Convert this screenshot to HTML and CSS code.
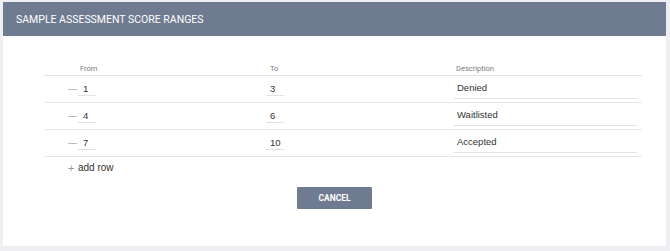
FILE: index.html
```html
<!DOCTYPE html>
<html>
<head>
<meta charset="utf-8">
<link rel="stylesheet" href="styles.css">
</head>
<body>
<div class="card">
  <div class="card-header">SAMPLE ASSESSMENT SCORE RANGES</div>
  <div class="card-body">
    <div class="table">
      <div class="row head">
        <div class="cell c-from"><span class="th th-from">From</span></div>
        <div class="cell c-to"><span class="th th-to">To</span></div>
        <div class="cell c-desc"><span class="th th-desc">Description</span></div>
      </div>
      <div class="row">
        <div class="cell c-from"><span class="minus">—</span><span class="num">1</span></div>
        <div class="cell c-to"><span class="num">3</span></div>
        <div class="cell c-desc"><span class="desc">Denied</span></div>
      </div>
      <div class="row">
        <div class="cell c-from"><span class="minus">—</span><span class="num">4</span></div>
        <div class="cell c-to"><span class="num">6</span></div>
        <div class="cell c-desc"><span class="desc">Waitlisted</span></div>
      </div>
      <div class="row">
        <div class="cell c-from"><span class="minus">—</span><span class="num">7</span></div>
        <div class="cell c-to"><span class="num">10</span></div>
        <div class="cell c-desc"><span class="desc">Accepted</span></div>
      </div>
    </div>
    <div class="add-row"><span class="plus">+</span>add row</div>
    <div class="actions"><button class="btn">CANCEL</button></div>
  </div>
</div>
</body>
</html>
```

FILE: styles.css
```css
html, body {
  margin: 0;
  padding: 0;
  background: #eeeef3;
}
body {
  padding: 2px 4px 5px 3px;
  font-family: "Liberation Sans", Arial, sans-serif;
}
.card {
  background: #ffffff;
  height: 244px;
}
.card-header {
  background: #6f7b91;
  height: 34px;
  display: flex;
  align-items: center;
  padding-left: 13px;
  color: #ffffff;
  font-family: Roboto, sans-serif;
  font-size: 10.5px;
  letter-spacing: 0;
}
.card-body {
  padding: 26px 24px 0 41px;
}
.table {
  width: 598px;
}
.row {
  display: grid;
  grid-template-columns: 222px 188px 188px;
  height: 26px;
  border-bottom: 1px solid #e6e6e6;
  align-items: center;
}
.row.head {
  height: 13px;
  align-items: center;
  border-bottom: 1px solid #e3e3e3;
}
.cell {
  display: flex;
  align-items: center;
}
.th {
  font-family: Roboto, sans-serif;
  font-size: 7.5px;
  color: #7a7a7a;
}
.th-from { padding-left: 36px; }
.th-to { padding-left: 4px; }
.th-desc { padding-left: 2px; }
.minus {
  margin-left: 24px;
  width: 10px;
  color: #888;
  font-size: 9px;
  line-height: 12px;
}
.num {
  display: inline-block;
  width: 18px;
  box-sizing: border-box;
  padding-left: 5px;
  font-size: 9.5px;
  color: #333;
  line-height: 13px;
  border-bottom: 1px solid #e2e2e2;
}
.c-to .num { padding-left: 4px; }
.desc {
  display: inline-block;
  width: 183px;
  box-sizing: border-box;
  padding: 0 0 4px 3px;
  margin-top: 2px;
  font-size: 9.5px;
  color: #333;
  line-height: 13px;
  border-bottom: 1px solid #e2e2e2;
}
.add-row {
  margin-top: 4px;
  padding-left: 24px;
  font-size: 10px;
  color: #333;
  line-height: 14px;
  display: flex;
  align-items: center;
}
.plus {
  color: #999;
  width: 10px;
  font-size: 11px;
}
.actions {
  display: flex;
  justify-content: center;
  padding-right: 17px;
  margin-top: 12px;
}
.btn {
  width: 75px;
  height: 22px;
  border: none;
  border-radius: 1px;
  background: #6f7b91;
  color: #fff;
  font-family: Roboto, sans-serif;
  font-weight: bold;
  font-size: 8.5px;
  padding: 0;
}
```
